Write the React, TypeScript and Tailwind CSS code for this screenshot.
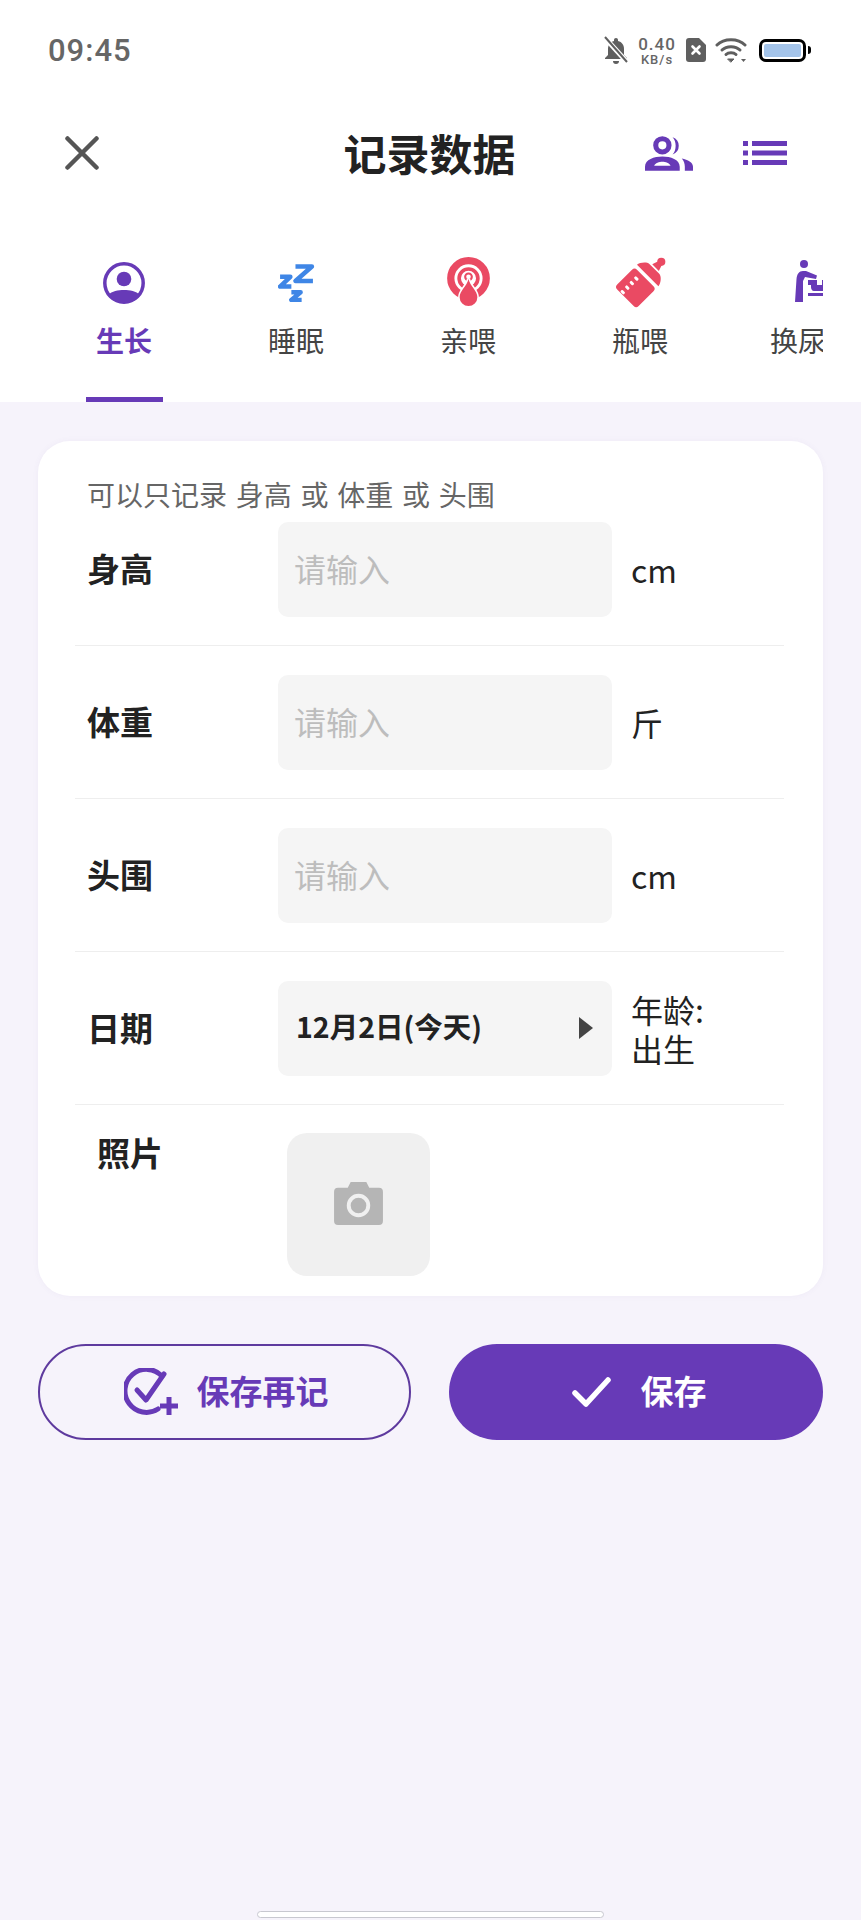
const purple = "#673ab7";
const red = "#ea4a63";

function StatusBar() {
  return (
    <div className="flex h-[100px] items-center justify-between pl-[48px] pr-[50px] text-[#666]">
      <span className="mt-[2px] font-['Roboto',sans-serif] text-[31px] font-medium tracking-[1px]">09:45</span>
      <div className="flex items-center">
        <svg width="24" height="28" viewBox="0 0 24 28" fill="#5f5f5f">
          <path d="M12 2c1.200 0 2 .8 2 2v1c4 1 6 4 6 8v6l3 3v1H1v-1l3-3v-6c0-4 2-7 6-8V4c0-1.200.8-2 2-2z" />
          <path d="M9 25h6a3 3 0 0 1-6 0z" />
          <path d="M1 2l22 24" stroke="#fff" strokeWidth="5" />
          <path d="M1 1l22 25" stroke="#5f5f5f" strokeWidth="2" />
        </svg>
        <div className="ml-[8px] mt-[2px] flex w-[42px] flex-col items-center font-['Roboto',sans-serif] font-medium leading-none">
          <span className="text-[17px] tracking-[1px]">0.40</span>
          <span className="text-[13px] tracking-[1px]">KB/s</span>
        </div>
        <svg className="ml-[8px]" width="20" height="24" viewBox="0 0 20 24">
          <path d="M3 0h10l7 7v14a3 3 0 0 1-3 3H3a3 3 0 0 1-3-3V3a3 3 0 0 1 3-3z" fill="#5f5f5f" />
          <path d="M6.500 8.500l7 7M13.500 8.500l-7 7" stroke="#fff" strokeWidth="2.600" strokeLinecap="round" />
        </svg>
        <svg className="ml-[9px]" width="32" height="26" viewBox="0 0 32 26" fill="none" stroke="#5f5f5f" strokeLinecap="round">
          <path d="M2 8c7-7 21-7 28 0" strokeWidth="3" />
          <path d="M7 13c4.500-4.500 13.500-4.500 18 0" strokeWidth="3" />
          <path d="M11 17.500c2.500-2.500 7.500-2.500 10 0" strokeWidth="3" />
          <path d="M13 22h6l-3 3z" fill="#5f5f5f" strokeWidth="1" />
          <path d="M26 22h5l-2.500 3z" fill="#5f5f5f" stroke="none" />
        </svg>
        <div className="ml-[12px] flex items-center">
          <div className="h-[23px] w-[47px] rounded-[7px] border-[3px] border-black p-[2px]">
            <div className="h-full w-[37px] rounded-[2px] bg-[#a4c4ea]" />
          </div>
          <div className="ml-[2px] h-[8px] w-[3px] rounded-r-[3px] bg-black" />
        </div>
      </div>
    </div>
  );
}

function Header() {
  return (
    <div className="flex h-[106px] items-center pl-[74px] pr-[74px]">
      <div className="-ml-[9px] flex flex-1">
        <svg width="34" height="34" viewBox="0 0 34 34" stroke="#555" strokeWidth="4.500" strokeLinecap="round">
          <path d="M2.500 2.500l29 29M31.500 2.500l-29 29" />
        </svg>
      </div>
      <h1 className="mb-[2px] ml-[7px] text-[43px] font-bold leading-none text-[#222]">记录数据</h1>
      <div className="flex flex-1 items-center justify-end gap-[50px]">
        <svg width="48" height="39" viewBox="0 0 47 36" fill={purple}>
          <path fillRule="evenodd" d="M17 1a9 9 0 1 1 0 18a9 9 0 0 1 0-18zm0 5a4 4 0 1 0 0 8a4 4 0 0 0 0-8z" />
          <path d="M27 2a9 9 0 0 1 0 17c2-2 3-5 3-8.500s-1-6.500-3-8.500z" />
          <path fillRule="evenodd" d="M0 35v-4c0-7 9-10 17-10s17 3 17 10v4zm9-5h16c-1-3-5-4-8-4s-7 1-8 4z" />
          <path d="M36 23c6 1 11 4 11 8v4h-8v-4c0-3-1-6-3-8z" />
        </svg>
        <svg width="44" height="24" viewBox="0 0 44 24" fill={purple}>
          <rect x="0" y="0" width="5" height="5" />
          <rect x="0" y="9.500" width="5" height="5" />
          <rect x="0" y="19" width="5" height="5" />
          <rect x="9" y="0" width="35" height="5" />
          <rect x="9" y="9.500" width="35" height="5" />
          <rect x="9" y="19" width="35" height="5" />
        </svg>
      </div>
    </div>
  );
}

function GrowthIcon() {
  return (
    <svg width="42" height="42" viewBox="0 0 42 42">
      <circle cx="21" cy="21" r="19.200" fill="none" stroke={purple} strokeWidth="3.500" />
      <circle cx="21" cy="17" r="7.300" fill={purple} />
      <path d="M5 33c4-4 10-5 16-5s12 1 16 5c-3 5-9 8-16 8s-13-3-16-8z" fill={purple} />
    </svg>
  );
}

function SleepIcon() {
  return (
    <svg width="37" height="38" viewBox="0 0 36 37" fill="none" stroke="#3f86e6" strokeWidth="4.400" strokeLinejoin="round">
      <path d="M17 2.500h16L17 16.500h17" />
      <path d="M2 12.500h10L2 22h11" />
      <path d="M13 27.500h9l-9 7.500h10" />
    </svg>
  );
}

function NurseIcon() {
  return (
    <svg className="mb-[3px] shrink-0" width="43" height="49" viewBox="0 0 41 47" fill="none">
      <circle cx="20.500" cy="20.500" r="17" stroke={red} strokeWidth="7" />
      <circle cx="20.500" cy="20.500" r="9" stroke={red} strokeWidth="3.500" />
      <circle cx="20.500" cy="19" r="3.200" stroke={red} strokeWidth="2" />
      <path d="M20.500 21C22 28 29 32 29 38.500a8.500 8.500 0 0 1-17 0C12 32 19 28 20.500 21z" fill={red} stroke="#fff" strokeWidth="3" paintOrder="stroke" />
    </svg>
  );
}

function BottleIcon() {
  return (
    <svg className="mb-[3px] shrink-0" width="56" height="56" viewBox="0 0 48 48" fill={red}>
      <g transform="translate(20 29) rotate(45)">
        <rect x="-13" y="-12" width="26" height="24" rx="3" />
        <path d="M-13-15c0-3 4-8 7-8H6c3 0 7 5 7 8z" />
        <path d="M-4-24.500L-2.500-29a3.500 3.500 0 1 1 5 0L4-24.500z" />
        <rect x="-7" y="-7.500" width="4" height="2.500" rx="1" fill="#fff" />
        <rect x="-7" y="-2" width="4" height="2.500" rx="1" fill="#fff" />
        <rect x="-7" y="3.500" width="4" height="2.500" rx="1" fill="#fff" />
        <rect x="-7" y="9" width="4" height="2.500" rx="1" fill="#fff" />
      </g>
    </svg>
  );
}

function DiaperIcon() {
  return (
    <svg className="mb-[5px] shrink-0" width="34" height="43" viewBox="0 0 34 43" fill={purple}>
      <circle cx="9" cy="5" r="4" />
      <path d="M0 43L1.500 20C2 15 4 12 8 12h3l11 4.500-1 3.500L10 18l-2 4v21z" />
      <path d="M13 21h9v5h5v-5h6v6c0 3-2 5-5 5h-9c-2 0-3-2-3-4v-2h-3z" />
      <rect x="13" y="34" width="21" height="3" />
    </svg>
  );
}

const tabs = [
  { label: "生长", icon: <GrowthIcon /> },
  { label: "睡眠", icon: <SleepIcon /> },
  { label: "亲喂", icon: <NurseIcon /> },
  { label: "瓶喂", icon: <BottleIcon /> },
  { label: "换尿布", icon: <DiaperIcon /> },
];

function Tabs() {
  return (
    <div className="ml-[38px] flex h-[196px] w-[785px] overflow-hidden">
      {tabs.map((tab, i) => (
        <div key={tab.label} className="relative flex w-[172px] shrink-0 flex-col items-center pt-[49px]">
          <div className="flex h-[56px] w-[50px] items-center justify-center">{tab.icon}</div>
          <span
            className={
              i === 0
                ? "mt-[9px] text-[28px] font-bold leading-[40px] text-[#673ab7]"
                : "mt-[9px] text-[28px] leading-[40px] text-[#444]"
            }
          >
            {tab.label}
          </span>
          {i === 0 && <div className="absolute bottom-0 left-[48px] h-[5px] w-[77px] bg-[#673ab7]" />}
        </div>
      ))}
    </div>
  );
}

function InputRow({ label, unit }: { label: string; unit: string }) {
  return (
    <div className="flex items-center border-b border-[#eeeeee] pb-[28px] pl-[12px]">
      <span className="mb-[3px] w-[191px] text-[33px] font-bold leading-none text-[#222]">{label}</span>
      <div className="flex h-[95px] w-[334px] items-center rounded-[10px] bg-[#f5f5f5] pb-[4px] pl-[16px] text-[32px] text-[#bdbdbd]">
        请输入
      </div>
      <span className="mb-[2px] ml-[19px] text-[32px] text-[#222]">{unit}</span>
    </div>
  );
}

function Card() {
  return (
    <div className="mx-[38px] mt-[39px] rounded-[32px] bg-white pb-[20px] pt-[28px] shadow-[0_0_6px_rgba(100,80,160,0.05)]">
      <div className="ml-[49px] text-[28px] leading-[50px] text-[#666] [word-spacing:2.500px]">可以只记录 身高 或 体重 或 头围</div>
      <div className="ml-[37px] mr-[39px] mt-[3px]">
        <InputRow label="身高" unit="cm" />
        <div className="pt-[29px]">
          <InputRow label="体重" unit="斤" />
        </div>
        <div className="pt-[29px]">
          <InputRow label="头围" unit="cm" />
        </div>
        <div className="flex items-center border-b border-[#eeeeee] pb-[28px] pl-[12px] pt-[29px]">
          <span className="mb-[3px] w-[191px] text-[33px] font-bold leading-none text-[#222]">日期</span>
          <div className="flex h-[95px] w-[334px] items-center justify-between rounded-[10px] bg-[#f5f5f5] pb-[2px] pl-[18px] pr-[19px]">
            <span className="mb-[2px] text-[28.500px] font-bold text-[#222]">12月2日(今天)</span>
            <svg width="14" height="22" viewBox="0 0 14 22" fill="#444">
              <path d="M0 0l14 11L0 22z" />
            </svg>
          </div>
          <div className="ml-[19px] text-[32px] leading-[39px] text-[#222]">
            年龄:
            <br />
            出生
          </div>
        </div>
        <div className="flex items-start pt-[28px]">
          <span className="ml-[22px] mt-[3px] w-[190px] text-[33px] font-bold leading-none text-[#222]">照片</span>
          <div className="flex h-[143px] w-[143px] items-center justify-center rounded-[20px] bg-[#f0f0f0]">
            <svg className="mb-[2px]" width="49" height="43" viewBox="0 0 50 44">
              <path d="M17 0h16l3 6h10a4 4 0 0 1 4 4v30a4 4 0 0 1-4 4H4a4 4 0 0 1-4-4V10a4 4 0 0 1 4-4h10z" fill="#b5b5b5" />
              <circle cx="25" cy="24" r="10" fill="#b5b5b5" stroke="#f0f0f0" strokeWidth="4" />
            </svg>
          </div>
        </div>
      </div>
    </div>
  );
}

function Buttons() {
  return (
    <div className="mx-[38px] mt-[48px] flex justify-between">
      <button className="flex h-[96px] w-[373px] items-center justify-center gap-[19px] rounded-full border-2 border-[#5e3a9e] pl-[3px] text-[33px] font-bold text-[#673ab7]">
        <svg width="54" height="48" viewBox="0 0 54 48" fill="none" stroke={purple} strokeWidth="5">
          <path d="M38 8A21.500 21.500 0 1 0 34 41" strokeLinecap="round" />
          <path d="M13 22l9 10L40 6" strokeLinecap="round" strokeLinejoin="round" />
          <path d="M36 38h18M45 29v18" strokeWidth="5" />
        </svg>
        <span className="mb-[2px]">保存再记</span>
      </button>
      <button className="flex h-[96px] w-[374px] items-center justify-center gap-[30px] rounded-full bg-[#673ab7] pl-[6px] text-[33px] font-bold text-white">
        <svg width="39" height="30" viewBox="0 0 39 30" fill="none" stroke="#fff" strokeWidth="5.500" strokeLinecap="round" strokeLinejoin="round">
          <path d="M3 16l11 11L36 3" />
        </svg>
        <span className="mb-[2px]">保存</span>
      </button>
    </div>
  );
}

export default function App() {
  return (
    <div className="flex min-h-[1920px] flex-col bg-[#f6f3fb] font-['Noto_Sans_CJK_SC','Noto_Sans',sans-serif]">
      <div className="bg-white">
        <StatusBar />
        <Header />
        <Tabs />
      </div>
      <Card />
      <Buttons />
      <div className="mb-[2px] mt-auto h-[7px] w-[347px] self-center rounded-full border border-[#c8c8d0] bg-white" />
    </div>
  );
}
